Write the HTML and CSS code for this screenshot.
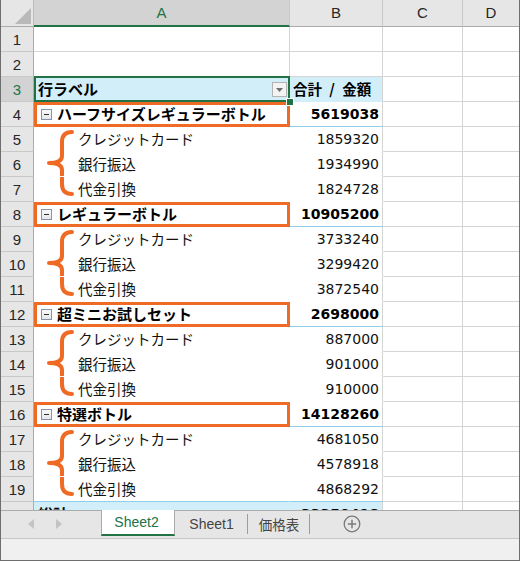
FILE: index.html
```html
<!DOCTYPE html>
<html lang="ja">
<head>
<meta charset="utf-8">
<link rel="stylesheet" href="styles.css">
</head>
<body>
<div class="window">
  <div class="sheet">
    <div class="corner"><svg width="16" height="16" viewBox="0 0 16 16"><polygon points="16,0 16,16 0,16" fill="#b9b9b9"/></svg></div>
    <div class="colh sel">A</div>
    <div class="colh">B</div>
    <div class="colh">C</div>
    <div class="colh last">D</div>

    <div class="rowh">1</div><div class="c"></div><div class="c"></div><div class="c"></div><div class="c last"></div>
    <div class="rowh">2</div><div class="c"></div><div class="c"></div><div class="c"></div><div class="c last"></div>

    <div class="rowh sel">3</div>
    <div class="c pa head selcell"><span class="jb">行ラベル</span><span class="filter"><svg width="7" height="4" viewBox="0 0 7 4"><polygon points="0,0 7,0 3.5,4" fill="#6e6e6e"/></svg></span><i class="handle"></i></div>
    <div class="c pb head"><span class="jb hd">合計 / 金額</span></div>
    <div class="c"></div><div class="c last"></div>

    <div class="rowh">4</div>
    <div class="c pa grp boxed"><span class="minus"></span><span class="jb">ハーフサイズレギュラーボトル</span></div>
    <div class="c pb grp num bold">5619038</div>
    <div class="c"></div><div class="c last"></div>

    <div class="rowh">5</div>
    <div class="c pa item brace-start"><svg class="brace" width="28" height="70" viewBox="0 0 28 70"><path d="M26 4 Q16 4 16 14 L16 28 Q16 35 3 35 Q16 35 16 42 L16 56 Q16 66 26 66" fill="none" stroke="#ef6a24" stroke-width="4" stroke-linecap="round" stroke-linejoin="round"/></svg><span class="j">クレジットカード</span></div>
    <div class="c pb num">1859320</div>
    <div class="c"></div><div class="c last"></div>

    <div class="rowh">6</div>
    <div class="c pa item"><span class="j">銀行振込</span></div>
    <div class="c pb num">1934990</div>
    <div class="c"></div><div class="c last"></div>

    <div class="rowh">7</div>
    <div class="c pa item"><span class="j">代金引換</span></div>
    <div class="c pb num">1824728</div>
    <div class="c"></div><div class="c last"></div>

    <div class="rowh">8</div>
    <div class="c pa grp boxed"><span class="minus"></span><span class="jb">レギュラーボトル</span></div>
    <div class="c pb grp num bold">10905200</div>
    <div class="c"></div><div class="c last"></div>

    <div class="rowh">9</div>
    <div class="c pa item brace-start"><svg class="brace" width="28" height="70" viewBox="0 0 28 70"><path d="M26 4 Q16 4 16 14 L16 28 Q16 35 3 35 Q16 35 16 42 L16 56 Q16 66 26 66" fill="none" stroke="#ef6a24" stroke-width="4" stroke-linecap="round" stroke-linejoin="round"/></svg><span class="j">クレジットカード</span></div>
    <div class="c pb num">3733240</div>
    <div class="c"></div><div class="c last"></div>

    <div class="rowh">10</div>
    <div class="c pa item"><span class="j">銀行振込</span></div>
    <div class="c pb num">3299420</div>
    <div class="c"></div><div class="c last"></div>

    <div class="rowh">11</div>
    <div class="c pa item"><span class="j">代金引換</span></div>
    <div class="c pb num">3872540</div>
    <div class="c"></div><div class="c last"></div>

    <div class="rowh">12</div>
    <div class="c pa grp boxed"><span class="minus"></span><span class="jb">超ミニお試しセット</span></div>
    <div class="c pb grp num bold">2698000</div>
    <div class="c"></div><div class="c last"></div>

    <div class="rowh">13</div>
    <div class="c pa item brace-start"><svg class="brace" width="28" height="70" viewBox="0 0 28 70"><path d="M26 4 Q16 4 16 14 L16 28 Q16 35 3 35 Q16 35 16 42 L16 56 Q16 66 26 66" fill="none" stroke="#ef6a24" stroke-width="4" stroke-linecap="round" stroke-linejoin="round"/></svg><span class="j">クレジットカード</span></div>
    <div class="c pb num">887000</div>
    <div class="c"></div><div class="c last"></div>

    <div class="rowh">14</div>
    <div class="c pa item"><span class="j">銀行振込</span></div>
    <div class="c pb num">901000</div>
    <div class="c"></div><div class="c last"></div>

    <div class="rowh">15</div>
    <div class="c pa item"><span class="j">代金引換</span></div>
    <div class="c pb num">910000</div>
    <div class="c"></div><div class="c last"></div>

    <div class="rowh">16</div>
    <div class="c pa grp boxed"><span class="minus"></span><span class="jb">特選ボトル</span></div>
    <div class="c pb grp num bold">14128260</div>
    <div class="c"></div><div class="c last"></div>

    <div class="rowh">17</div>
    <div class="c pa item brace-start"><svg class="brace" width="28" height="70" viewBox="0 0 28 70"><path d="M26 4 Q16 4 16 14 L16 28 Q16 35 3 35 Q16 35 16 42 L16 56 Q16 66 26 66" fill="none" stroke="#ef6a24" stroke-width="4" stroke-linecap="round" stroke-linejoin="round"/></svg><span class="j">クレジットカード</span></div>
    <div class="c pb num">4681050</div>
    <div class="c"></div><div class="c last"></div>

    <div class="rowh">18</div>
    <div class="c pa item"><span class="j">銀行振込</span></div>
    <div class="c pb num">4578918</div>
    <div class="c"></div><div class="c last"></div>

    <div class="rowh">19</div>
    <div class="c pa item pre-total"><span class="j">代金引換</span></div>
    <div class="c pb num pre-total">4868292</div>
    <div class="c"></div><div class="c last"></div>

    <div class="rowh">20</div>
    <div class="c pa total"><span class="jb">総計</span></div>
    <div class="c pb total num bold">33350498</div>
    <div class="c"></div><div class="c last"></div>
  </div>

  <div class="tabbar">
    <div class="nav">
      <svg class="arrow" width="6" height="10" viewBox="0 0 6 10"><polygon points="6,0 6,10 0,5" fill="#c3c3c3"/></svg>
      <svg class="arrow" width="6" height="10" viewBox="0 0 6 10"><polygon points="0,0 0,10 6,5" fill="#c3c3c3"/></svg>
    </div>
    <div class="tab active">Sheet2</div>
    <div class="tab">Sheet1</div>
    <div class="tab jp">価格表</div>
    <div class="add"><svg width="18" height="18" viewBox="0 0 18 18"><circle cx="9" cy="9" r="7.8" fill="none" stroke="#7b7b7b" stroke-width="1.3"/><path d="M9 4.8 V13.2 M4.8 9 H13.2" stroke="#7b7b7b" stroke-width="1.5"/></svg></div>
  </div>
  <div class="status"></div>
</div>
</body>
</html>
```

FILE: styles.css
```css
* { box-sizing: border-box; }
html, body { margin: 0; padding: 0; background: #fff; }

.window {
  width: 520px;
  height: 561px;
  border-left: 1px solid #6e6e6e;
  border-right: 1px solid #6e6e6e;
  border-bottom: 1px solid #6e6e6e;
  display: flex;
  flex-direction: column;
  font-family: "Liberation Sans", "Noto Sans CJK JP", sans-serif;
  overflow: hidden;
}

.sheet {
  height: 510px;
  flex: none;
  overflow: hidden;
  display: grid;
  grid-template-columns: 33px 256px 93px 80px 56px;
  grid-template-rows: 27px;
  grid-auto-rows: 25px;
  background: #fff;
}

.corner {
  background: #e6e6e6;
  border-right: 1px solid #bdbdbd;
  border-bottom: 1px solid #ababab;
  display: flex;
  align-items: flex-end;
  justify-content: flex-end;
  padding: 0 2px 2px 0;
}

.colh {
  background: #e6e6e6;
  border-right: 1px solid #c8c8c8;
  border-bottom: 1px solid #ababab;
  display: flex;
  align-items: center;
  justify-content: center;
  font-size: 15px;
  color: #262626;
  padding-bottom: 1px;
}
.colh.sel {
  background: #d3d3d3;
  color: #217346;
  border-bottom: 2px solid #217346;
}
.colh.last { border-right: none; }

.rowh {
  background: #e6e6e6;
  border-right: 1px solid #ababab;
  border-bottom: 1px solid #c8c8c8;
  display: flex;
  align-items: center;
  justify-content: center;
  font-size: 15px;
  color: #262626;
}
.rowh.sel { background: #d3d3d3; color: #217346; }

.c {
  border-right: 1px solid #d4d4d4;
  border-bottom: 1px solid #d4d4d4;
  display: flex;
  align-items: center;
  min-width: 0;
  white-space: nowrap;
}
.c.last { border-right: none; }

/* pivot table area */
.pa { border-right-color: #fff; border-bottom-color: #fff; position: relative; padding-bottom: 2px; }
.pb { border-bottom-color: #fff; justify-content: flex-end; padding-right: 3px; }

.head { background: #d2eef9; border-bottom-color: #d2eef9; }
.pa.head { border-right-color: #d2eef9; padding-left: 4px; }
.pb.head { justify-content: flex-start; padding-left: 3px; padding-bottom: 2px; }

.grp { border-bottom-color: #8fcfeb; }
.pre-total { border-bottom-color: #8fcfeb; }
.total { background: #d2eef9; }
.pa.total { border-right-color: #d2eef9; padding-left: 4px; }

.j {
  font-family: "Noto Sans CJK JP", sans-serif;
  font-size: 14.5px;
  color: #111;
}
.jb {
  font-family: "Noto Sans CJK JP", sans-serif;
  font-size: 15px;
  font-weight: bold;
  color: #000;
}
.jb.hd { font-size: 14.5px; word-spacing: 4px; }

.num {
  font-family: "DejaVu Sans", sans-serif;
  font-size: 14px;
  color: #111;
}
.num.bold { font-weight: bold; color: #000; }

.item { padding-left: 44px; }
.grp.pa { padding-left: 7px; gap: 5px; }

.minus {
  width: 11px;
  height: 11px;
  border: 1px solid #8593ad;
  background: linear-gradient(#fafafa, #e4e6ea);
  position: relative;
  flex: none;
  margin-top: 2px;
}
.minus::after {
  content: "";
  position: absolute;
  left: 2px;
  right: 2px;
  top: 4px;
  height: 1px;
  background: #333;
}

.boxed::after {
  content: "";
  position: absolute;
  left: 0;
  top: 0;
  right: -1px;
  bottom: -1px;
  border: 3px solid #ef6a24;
  pointer-events: none;
}

.brace {
  position: absolute;
  left: 12px;
  top: 1px;
  overflow: visible;
}

.filter {
  margin-left: auto;
  margin-right: 2px;
  margin-top: 2px;
  width: 15px;
  height: 15px;
  border: 1px solid #b4b4b4;
  background: #f3f3f3;
  display: flex;
  align-items: center;
  justify-content: center;
  padding-top: 2px;
}

.selcell::before {
  content: "";
  position: absolute;
  left: 0;
  top: -1px;
  right: -1px;
  bottom: -1px;
  border: 2px solid #217346;
  pointer-events: none;
}
.handle {
  position: absolute;
  right: -4px;
  bottom: -4px;
  width: 6px;
  height: 6px;
  background: #217346;
  outline: 1px solid #fff;
  z-index: 2;
}

/* sheet tabs */
.tabbar {
  height: 28px;
  flex: none;
  background: #e6e6e6;
  border-top: 1px solid #ababab;
  display: flex;
  align-items: flex-start;
}
.nav {
  width: 100px;
  height: 26px;
  display: flex;
  align-items: center;
  padding-left: 27px;
  gap: 22px;
}
.tab {
  height: 25px;
  display: flex;
  align-items: center;
  justify-content: center;
  font-size: 14px;
  color: #444;
  position: relative;
}
.tab.active {
  width: 74px;
  margin-top: -1px;
  height: 26px;
  background: #fff;
  color: #217346;
  border-left: 1px solid #ababab;
  border-right: 1px solid #ababab;
  border-bottom: 2px solid #217346;
  padding-right: 3px;
}
.tab:nth-child(3) { width: 73px; }
.tab.jp { width: 62px; font-family: "Noto Sans CJK JP", sans-serif; font-size: 13.5px; }
.tab:nth-child(3)::after,
.tab.jp::after {
  content: "";
  position: absolute;
  right: 0;
  top: 3px;
  bottom: 2px;
  width: 1px;
  background: #9c9c9c;
}
.add {
  height: 26px;
  display: flex;
  align-items: center;
  margin-left: 33px;
}

.status {
  flex: 1;
  background: #f0f0f0;
  border-top: 1px solid #c6c6c6;
}
```
